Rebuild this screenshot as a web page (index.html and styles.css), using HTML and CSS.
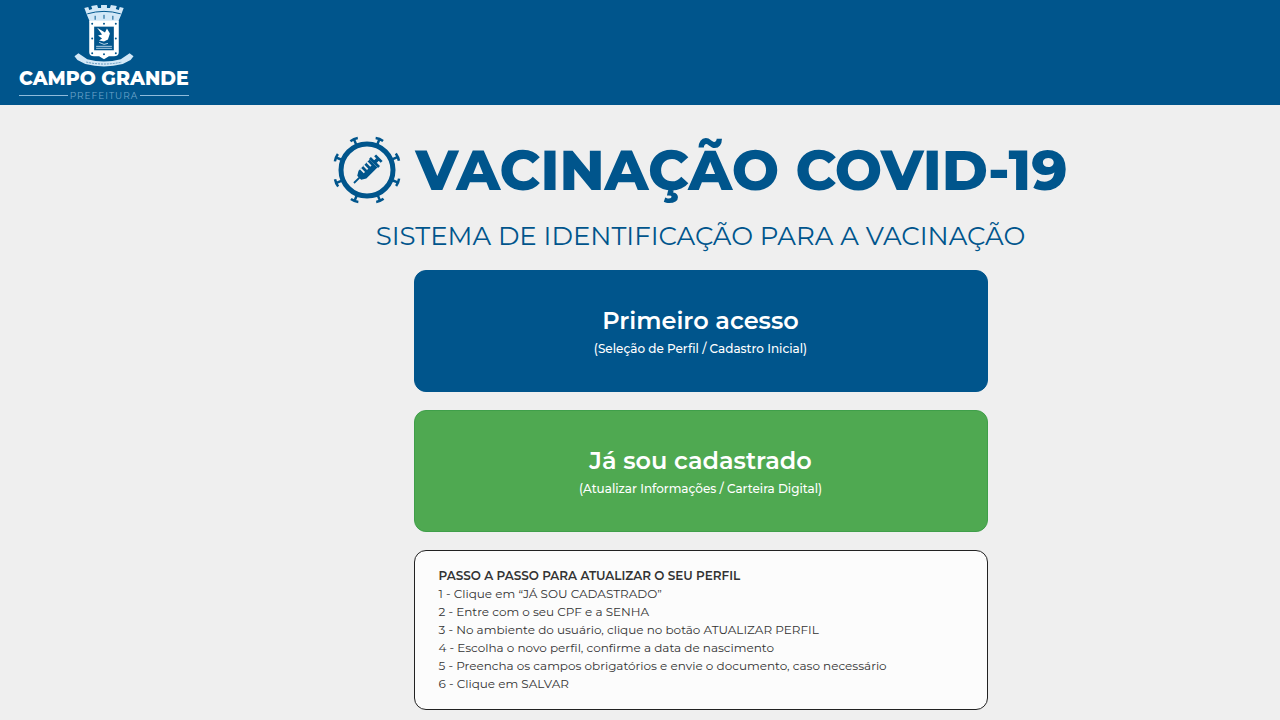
FILE: index.html
```html
<!DOCTYPE html>
<html lang="pt-BR">
<head>
    <meta charset="UTF-8">
    <meta name="viewport" content="width=device-width, initial-scale=1.0">
    <title>Vacinação COVID-19</title>
    <link rel="stylesheet" href="styles.css">
</head>
<body>
    <header class="topo">
        <a href="#" class="logo">
            <svg class="brasao" viewBox="0 0 62 64" aria-hidden="true">
                <!-- coroa -->
                <path fill="#d3e8f7" d="M11 4l4-1 1 3 3-1-1-3 6-1 1 3h3V1h6v3h3l1-3 6 1-1 3 3 1 1-3 4 1-3 8-3 7H17l-3-7z"/>
                <path fill="none" stroke="#00558c" d="M14 10q17-5 34 0M22 16v-4M31 15v-4M40 16v-4"/>
                <!-- escudo -->
                <path fill="#fff" d="M16 17h30v32q0 4-5 4h-5l-5 3-5-3h-5q-5 0-5-4z"/>
                <path fill="#00558c" d="M21 23h20v24H21z"/>
                <path fill="#fff" d="M24 24l8 5 2-4 3 5-2 6-4 2-5-1 3-2-4-3 4-1z"/>
                <path fill="none" stroke="#b5d3e8" d="M23 43h16M23 45h16M26 39l5 2 4-1"/>
                <path fill="none" stroke="#00558c" stroke-width="2" stroke-linecap="round" d="M19 20h0M31 20h0M43 20h0M19 35h0M43 35h0M19 50h0M31 51h0M43 50h0"/>
                <!-- faixa -->
                <path fill="#d3e8f7" d="M1 53l4-3 9 6q17 5 34 0l9-6 4 3-3 4-8 4q-19 5-38 0l-8-4z"/>
                <path fill="none" stroke="#5b93ba" stroke-dasharray="2 1" d="M13 59q18 4 36 0"/>
            </svg>
            <span class="cidade">CAMPO GRANDE</span>
            <span class="orgao">PREFEITURA</span>
        </a>
    </header>

    <main class="conteudo">
        <div class="titulo">
            <svg class="virus" viewBox="-34 -34 68 68" aria-hidden="true">
                <defs>
                    <path id="espinho" d="M0-28v-5M-4-33q4-1 8 0" fill="none" stroke="#00558c" stroke-width="2.5"/>
                </defs>
                <circle r="26" fill="none" stroke="#00558c" stroke-width="5"/>
                <use href="#espinho" transform="rotate(22)"/>
                <use href="#espinho" transform="rotate(67)"/>
                <use href="#espinho" transform="rotate(112)"/>
                <use href="#espinho" transform="rotate(157)"/>
                <use href="#espinho" transform="rotate(202)"/>
                <use href="#espinho" transform="rotate(247)"/>
                <use href="#espinho" transform="rotate(292)"/>
                <use href="#espinho" transform="rotate(337)"/>
                <!-- seringa -->
                <g transform="rotate(45) scale(.92)" fill="#00558c">
                    <path d="M-6-10H6V7L3 12H1v8h-2v-8h-2l-3-5z"/>
                    <path d="M-7-13H7v3H-7zM-2-18h4v6h-4zM-5-19H5v3H-5z"/>
                    <path fill="#eee" d="M-6-7h6v2h-6zM-6-2h6v2h-6zM-6 3h6v2h-6z"/>
                </g>
            </svg>
            <h1>VACINAÇÃO COVID-19</h1>
        </div>
        <h2>SISTEMA DE IDENTIFICAÇÃO PARA A VACINAÇÃO</h2>

        <div class="opcoes">
            <button type="button" class="opcao azul">
                <strong>Primeiro acesso</strong>
                <span>(Seleção de Perfil / Cadastro Inicial)</span>
            </button>
            <button type="button" class="opcao verde">
                <strong>Já sou cadastrado</strong>
                <span>(Atualizar Informações / Carteira Digital)</span>
            </button>
            <section class="passos">
                <h3>PASSO A PASSO PARA ATUALIZAR O SEU PERFIL</h3>
                <p>1 - Clique em “JÁ SOU CADASTRADO”</p>
                <p>2 - Entre com o seu CPF e a SENHA</p>
                <p>3 - No ambiente do usuário, clique no botão ATUALIZAR PERFIL</p>
                <p>4 - Escolha o novo perfil, confirme a data de nascimento</p>
                <p>5 - Preencha os campos obrigatórios e envie o documento, caso necessário</p>
                <p>6 - Clique em SALVAR</p>
            </section>
        </div>
    </main>
</body>
</html>
```
FILE: styles.css
```css
* {
    box-sizing: border-box;
}
body {
    margin: 0;
    background-color: #efefef;
    color: #333;
    font-family: Montserrat, Inter, sans-serif;
}
.topo {
    display: flex;
    background-color: #00558c;
    padding: 4px 19px;
}
.logo {
    display: flex;
    flex-direction: column;
    align-items: center;
    color: #fff;
    text-decoration: none;
}
.brasao {
    width: 62px;
    height: 63px;
}
.cidade {
    font-size: 19px;
    line-height: 23px;
    font-weight: 800;
}
.orgao {
    display: flex;
    align-items: center;
    align-self: stretch;
    gap: 2px;
    font-size: 9px;
    line-height: 11px;
    font-weight: 400;
    letter-spacing: 1px;
    color: #6fa5cb;
}
.orgao::before,
.orgao::after {
    content: "";
    flex: 1;
    height: 1px;
    background-color: #8fbbdb;
}
.conteudo {
    padding: 29px 0 9px 121px;
}
.titulo {
    display: flex;
    justify-content: center;
    align-items: center;
    gap: 14px;
    color: #00558c;
}
.virus {
    width: 68px;
    height: 68px;
    overflow: visible;
}
h1 {
    margin: 0;
    font-size: 56px;
    line-height: 72px;
    font-weight: 800;
}
h2 {
    margin: 10px 0 14px;
    color: #00558c;
    font-size: 26px;
    line-height: 40px;
    font-weight: 400;
    text-align: center;
}
.opcoes {
    display: flex;
    flex-direction: column;
    gap: 18px;
    max-width: 574px;
    margin: 0 auto;
}
.opcao {
    padding: 32px 16px;
    border: 1px solid #00558c;
    border-radius: 12px;
    color: #fff;
    font-family: inherit;
    cursor: pointer;
}
.opcao strong,
.opcao span {
    display: block;
}
.opcao strong {
    font-size: 24px;
    line-height: 36px;
    font-weight: 600;
}
.opcao span {
    font-size: 12px;
    line-height: 20px;
    font-weight: 500;
}
.azul {
    background-color: #00558c;
}
.verde {
    background-color: #4fa951;
    border-color: #3f9f4a;
}
.passos {
    padding: 16px 24px;
    border: 1px solid #222;
    border-radius: 12px;
    background-color: #fcfcfc;
    font-size: 12px;
    line-height: 18px;
}
.passos h3 {
    margin: 0;
    font-size: 12px;
    font-weight: 600;
}
.passos p {
    margin: 0;
}
```
